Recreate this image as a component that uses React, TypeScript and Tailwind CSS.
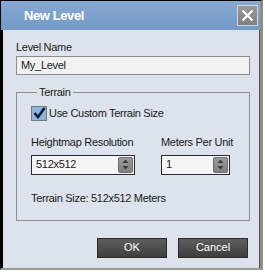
import React from "react";

const font = { fontFamily: '"Liberation Sans", Arial, sans-serif' };

function Spinner({ value, width }: { value: string; width: string }) {
  return (
    <div className={`${width} h-[20px] flex border border-[#2a2a2a] bg-[#f5f5f5]`}>
      <div className="flex-1 pl-[4px] flex items-center text-[11px] tracking-[-0.3px] text-[#1a1a1a]">{value}</div>
      <div className="w-[15px] my-[1px] mr-[1px] rounded-[2px] bg-gradient-to-b from-[#9a9a9a] to-[#828282] border border-[#6e6e6e] flex items-center justify-center">
        <svg width="7" height="11" viewBox="0 0 7 11">
          <path d="M3.5 0.5 L6.5 4 L0.5 4 Z" fill="#3d3d3d" />
          <path d="M3.5 10.5 L6.5 7 L0.5 7 Z" fill="#3d3d3d" />
        </svg>
      </div>
    </div>
  );
}

function DarkButton({ label }: { label: string }) {
  return (
    <button className="w-[70px] h-[20px] border border-[#2b2b2b] bg-gradient-to-b from-[#5e5e5e] to-[#3e3e3e] text-white text-[11px] flex items-center justify-center">
      {label}
    </button>
  );
}

export default function App() {
  return (
    <div className="w-[265px] h-[273px] bg-white" style={font}>
      <div className="w-[263px] h-[270px] flex flex-col border-t border-l border-black border-r-[3px] border-r-[#8f8c82] border-b-[2px] border-b-[#9c9a8f]">
        <div className="h-[29px] flex items-center justify-between bg-gradient-to-b from-[#88aad3] to-[#7399c7] pl-[23px] pr-[2px]">
          <span className="text-white font-bold text-[13px] tracking-[-0.4px]">New Level</span>
          <div className="w-[21px] h-[21px] border border-[#d0d6de] bg-gradient-to-b from-[#999] to-[#808080] flex items-center justify-center">
            <svg width="13" height="13" viewBox="0 0 13 13">
              <path d="M1.5 1.5 L11.5 11.5 M11.5 1.5 L1.5 11.5" stroke="white" strokeWidth="2.2" />
            </svg>
          </div>
        </div>
        <div className="flex-1 flex flex-col bg-[#dce3ec] border-l-[2px] border-l-black border-r border-r-[#505050] pl-[13px] pr-[9px] pt-[11px]">
          <div className="text-[11px] leading-[13px] tracking-[-0.3px] text-[#1a1a1a]">Level Name</div>
          <div className="mt-[2px] h-[19px] border border-[#8c8c8c] bg-[#f2f2f2] pl-[4px] flex items-center text-[11px] tracking-[-0.3px] text-[#1a1a1a]">
            My_Level
          </div>
          <fieldset className="mt-[11px] border border-[#8e8e8e] pl-[14px] pb-[15px]">
            <legend className="ml-[6px] px-[2px] text-[11px] leading-[13px] tracking-[-0.3px] text-[#1a1a1a]">Terrain</legend>
            <div className="mt-[6px] flex items-center gap-[2px]">
              <div className="w-[16px] h-[15px] border border-[#7a7a7a] bg-[#8fb1da] flex items-center justify-center">
                <svg width="13" height="12" viewBox="0 0 13 12">
                  <path d="M1.5 6 L5 10 L11.5 1" stroke="#0c1e3c" strokeWidth="2.6" fill="none" />
                </svg>
              </div>
              <span className="text-[11px] tracking-[-0.3px] text-[#1a1a1a]">Use Custom Terrain Size</span>
            </div>
            <div className="mt-[14px] flex gap-[26px]">
              <div className="flex flex-col">
                <div className="text-[11px] leading-[13px] tracking-[-0.3px] text-[#1a1a1a]">Heightmap Resolution</div>
                <div className="mt-[6px]">
                  <Spinner value="512x512" width="w-[104px]" />
                </div>
              </div>
              <div className="flex flex-col">
                <div className="text-[11px] leading-[13px] tracking-[-0.3px] text-[#1a1a1a]">Meters Per Unit</div>
                <div className="mt-[6px]">
                  <Spinner value="1" width="w-[69px]" />
                </div>
              </div>
            </div>
            <div className="mt-[17px] text-[11px] leading-[13px] tracking-[-0.3px] text-[#1a1a1a]">Terrain Size: 512x512 Meters</div>
          </fieldset>
          <div className="mt-[17px] mr-[2px] flex justify-end gap-[11px]">
            <DarkButton label="OK" />
            <DarkButton label="Cancel" />
          </div>
        </div>
      </div>
    </div>
  );
}
